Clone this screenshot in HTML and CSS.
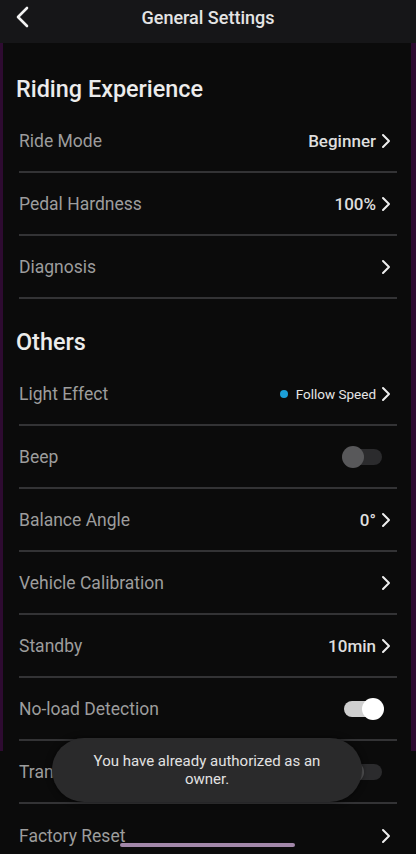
FILE: index.html
```html
<!DOCTYPE html>
<html lang="en">
<head>
<meta charset="utf-8">
<title>General Settings</title>
<link rel="stylesheet" href="styles.css">
</head>
<body>
<div class="screen">
  <header class="topbar">
    <svg class="back" width="16" height="22" viewBox="0 0 16 22"><path d="M12 2 L3 11 L12 20" fill="none" stroke="#f2f2f2" stroke-width="2.6" stroke-linecap="round" stroke-linejoin="round"/></svg>
    <h1 class="title">General Settings</h1>
  </header>
  <main class="content">
    <h2 class="section first">Riding Experience</h2>
    <div class="row"><span class="label">Ride Mode</span><span class="value">Beginner<svg class="chev" viewBox="0 0 10 16"><path d="M2 2 L8 8 L2 14" /></svg></span></div>
    <div class="row"><span class="label">Pedal Hardness</span><span class="value">100%<svg class="chev" viewBox="0 0 10 16"><path d="M2 2 L8 8 L2 14" /></svg></span></div>
    <div class="row"><span class="label">Diagnosis</span><span class="value"><svg class="chev" viewBox="0 0 10 16"><path d="M2 2 L8 8 L2 14" /></svg></span></div>
    <h2 class="section">Others</h2>
    <div class="row"><span class="label">Light Effect</span><span class="value small"><i class="dot"></i>Follow Speed<svg class="chev" viewBox="0 0 10 16"><path d="M2 2 L8 8 L2 14" /></svg></span></div>
    <div class="row"><span class="label">Beep</span><span class="switch off"><i class="knob"></i></span></div>
    <div class="row"><span class="label">Balance Angle</span><span class="value">0°<svg class="chev" viewBox="0 0 10 16"><path d="M2 2 L8 8 L2 14" /></svg></span></div>
    <div class="row"><span class="label">Vehicle Calibration</span><span class="value"><svg class="chev" viewBox="0 0 10 16"><path d="M2 2 L8 8 L2 14" /></svg></span></div>
    <div class="row"><span class="label">Standby</span><span class="value">10min<svg class="chev" viewBox="0 0 10 16"><path d="M2 2 L8 8 L2 14" /></svg></span></div>
    <div class="row"><span class="label">No-load Detection</span><span class="switch on"><i class="knob"></i></span></div>
    <div class="row"><span class="label">Transport Mode</span><span class="switch off"><i class="knob"></i></span></div>
    <div class="row"><span class="label">Factory Reset</span><span class="value"><svg class="chev" viewBox="0 0 10 16"><path d="M2 2 L8 8 L2 14" /></svg></span></div>
  </main>
  <div class="toast">You have already authorized as an owner.</div>
  <div class="home-indicator"></div>
</div>
</body>
</html>
```

FILE: styles.css
```css
* { box-sizing: border-box; }
html, body { margin: 0; padding: 0; background: #0b0b0b; }
body { font-family: Roboto, "Noto Sans", sans-serif; }
.screen {
  position: relative;
  width: 416px;
  height: 854px;
  overflow: hidden;
  background: #0b0b0b;
  display: flex;
  flex-direction: column;
}
.topbar {
  height: 43px;
  flex: none;
  background: #161618;
  display: flex;
  align-items: center;
  justify-content: center;
  position: relative;
}
.back { position: absolute; left: 15px; top: 6px; }
.title {
  margin: 0;
  font-size: 18px;
  font-weight: 500;
  color: #e4e4e4;
  margin-top: -8px;
}
.content {
  flex: 1;
  background:
    linear-gradient(#2e0b31, #2e0b31) left top / 3px 708px no-repeat,
    linear-gradient(#2e0b31, #2e0b31) right top / 5px 708px no-repeat,
    #0b0b0b;
}
.section {
  margin: 0;
  padding: 30px 16px 8px;
  line-height: 26px;
  font-size: 23.4px;
  font-weight: 500;
  color: #ececec;
}
.section.first { padding-top: 33px; }
.row {
  margin: 0 19px;
  height: 63px;
  border-bottom: 2px solid #333335;
  display: flex;
  align-items: center;
  justify-content: space-between;
  padding-top: 1px;
}
.row:last-child { border-bottom: none; }
.label {
  font-size: 17.5px;
  color: #9d9d9d;
}
.value {
  display: flex;
  align-items: center;
  font-size: 17px;
  font-weight: 500;
  color: #dedede;
  padding-right: 6px;
}
.value.small { font-size: 13.5px; font-weight: 400; color: #e6e6e6; }
.chev {
  width: 10px;
  height: 16px;
  margin-left: 5px;
  fill: none;
  stroke: #eeeeee;
  stroke-width: 2;
  stroke-linecap: round;
  stroke-linejoin: round;
}
.dot {
  width: 8px;
  height: 8px;
  border-radius: 50%;
  background: #1c9fd8;
  margin-right: 8px;
}
.switch {
  width: 38px;
  height: 16px;
  border-radius: 8px;
  margin-right: 15px;
  display: flex;
  align-items: center;
}
.switch .knob {
  width: 22px;
  height: 22px;
  border-radius: 50%;
}
.switch.off { background: #2b2b2d; justify-content: flex-start; }
.switch.off .knob { background: #58585a; margin-left: -2px; }
.switch.on { background: #cfcfcf; justify-content: flex-end; }
.switch.on .knob { background: #ffffff; margin-right: -2px; }
.toast {
  position: absolute;
  left: 52px;
  top: 738px;
  width: 310px;
  height: 64px;
  border-radius: 32px;
  background: #2a2a2b;
  box-shadow: 0 0 6px rgba(0,0,0,0.6);
  color: #e2e2e2;
  font-size: 15px;
  line-height: 18px;
  text-align: center;
  padding: 0 34px;
  display: flex;
  align-items: center;
  justify-content: center;
}
.home-indicator {
  position: absolute;
  left: 120px;
  top: 843px;
  width: 175px;
  height: 4px;
  border-radius: 2px;
  background: #a388aa;
}
```
